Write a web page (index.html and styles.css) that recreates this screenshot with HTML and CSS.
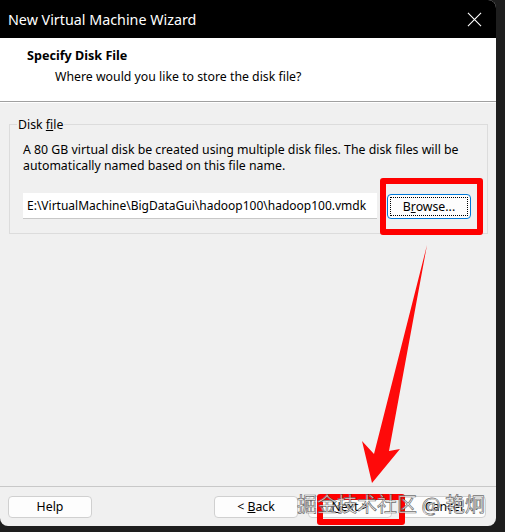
FILE: index.html
```html
<!DOCTYPE html>
<html lang="en">
<head>
  <meta charset="UTF-8" />
  <title>New Virtual Machine Wizard</title>
  <link rel="stylesheet" href="styles.css">
</head>
<body>
  <div class="window">
    <div class="titlebar">
      <span class="title">New Virtual Machine Wizard</span>
      <svg class="close" width="16" height="16" viewBox="0 0 16 16">
        <path d="M1 1 L15 15 M15 1 L1 15" stroke="#fff" stroke-width="1.2" />
      </svg>
    </div>

    <div class="header">
      <div class="header-title">Specify Disk File</div>
      <div class="header-sub">Where would you like to store the disk file?</div>
    </div>

    <div class="content">
      <fieldset class="group">
        <legend>Disk <u>f</u>ile</legend>
        <p class="note">A 80 GB virtual disk be created using multiple disk files. The disk files will be automatically named based on this file name.</p>
        <div class="file-row">
          <input class="path" type="text" value="E:\VirtualMachine\BigDataGui\hadoop100\hadoop100.vmdk" />
          <button class="btn browse"><span class="focus">B<u>r</u>owse...</span></button>
        </div>
      </fieldset>
    </div>

    <div class="footer">
      <button class="btn">Help</button>
      <div class="spacer"></div>
      <button class="btn">&lt; <u>B</u>ack</button>
      <button class="btn"><u>N</u>ext &gt;</button>
      <button class="btn">Cancel</button>
    </div>
  </div>

  <!-- annotations drawn over the dialog -->
  <div class="mark mark-browse"></div>
  <div class="mark mark-next"></div>
  <svg class="arrow" width="505" height="532" viewBox="0 0 505 532">
    <polygon points="427,245 389,451 400,449 372,483 362,441 374,454" fill="#fe0a0a" />
  </svg>
  <div class="watermark">掘金技术社区 @ 艳炯</div>
</body>
</html>
```

FILE: styles.css
```css
body {
  margin: 0;
  background: #1e1e1e;
  width: 505px;
  height: 532px;
  overflow: hidden;
  font-family: 'Noto Sans', sans-serif;
  position: relative;
}

.window {
  width: 496px;
  height: 526px;
  background: #f0f0f0;
  border-radius: 0 8px 8px 8px;
  overflow: hidden;
  display: flex;
  flex-direction: column;
}

.titlebar {
  height: 38px;
  background: #000;
  color: #fff;
  display: flex;
  align-items: center;
  justify-content: space-between;
  padding: 0 14px 0 8px;
  flex-shrink: 0;
}

.title {
  font-size: 14.3px;
}

.close {
  width: 15px;
  height: 15px;
  margin-top: 1px;
}

.header {
  height: 64px;
  background: #fff;
  border-bottom: 1px solid #a0a0a0;
  box-shadow: 0 1px 0 #fff;
  padding: 8px 0 0 27px;
  box-sizing: border-box;
  flex-shrink: 0;
  font-size: 12.3px;
  color: #000;
}

.header-title {
  font-weight: bold;
  font-size: 12.6px;
  margin-top: 1px;
}

.header-sub {
  margin: 4px 0 0 28px;
}

.content {
  flex: 1;
  padding: 14px 8px 0 9px;
}

.group {
  margin: 0;
  border: 1px solid #dcdcdc;
  padding: 5px 10px 14px 13px;
  font-size: 12.3px;
}

.group legend {
  padding: 0 1px;
  margin-left: -6px;
}

.note {
  margin: 4px 0 0;
  line-height: 16px;
  width: 445px;
}

.file-row {
  display: flex;
  align-items: center;
  gap: 10px;
  margin-top: 19px;
}

.path {
  width: 354px;
  height: 26px;
  box-sizing: border-box;
  border: none;
  border-bottom: 1px solid #c8c8c8;
  background: #fff;
  padding: 0 4px;
  font: 12px 'Noto Sans', sans-serif;
  color: #000;
}

.btn {
  width: 84px;
  height: 22px;
  background: #fdfdfd;
  border: 1px solid #d0d0d0;
  border-radius: 4px;
  font: 12.3px 'Noto Sans', sans-serif;
  color: #000;
  padding: 0;
}

.browse {
  height: 25px;
  border-color: #0078d7;
  padding: 2px;
}

.browse .focus {
  display: block;
  height: 100%;
  border: 1px dotted #000;
  box-sizing: border-box;
  line-height: 18px;
}

.footer {
  height: 39px;
  border-top: 1px solid #c8c8c8;
  display: flex;
  align-items: center;
  gap: 10px;
  padding: 0 10px 0 8px;
  flex-shrink: 0;
}

.spacer {
  flex: 1;
}

.mark {
  position: absolute;
  border: 6px solid #fe0000;
  border-radius: 3px;
  box-sizing: border-box;
}

.mark-browse {
  left: 380px;
  top: 178px;
  width: 103px;
  height: 57px;
}

.mark-next {
  left: 317px;
  top: 494px;
  width: 88px;
  height: 31px;
}

.arrow {
  position: absolute;
  left: 0;
  top: 0;
}

.watermark {
  position: absolute;
  left: 297px;
  top: 490px;
  white-space: nowrap;
  font-family: 'Noto Sans CJK SC', sans-serif;
  font-size: 20px;
  line-height: 28px;
  color: rgba(255, 255, 255, 0.8);
  -webkit-text-stroke: 0.7px rgba(70, 70, 70, 0.8);
}
```
